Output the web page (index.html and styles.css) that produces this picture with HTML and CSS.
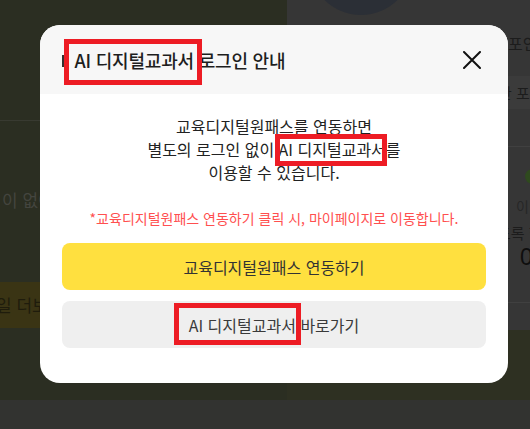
FILE: index.html
```html
<!DOCTYPE html>
<html lang="ko">
<head>
<meta charset="utf-8">
<title>AI 디지털교과서 로그인 안내</title>
<link rel="stylesheet" href="styles.css">
</head>
<body>
<div class="page">
  <div class="main">
    <div class="left">
      <div class="left-top"></div>
      <div class="left-msg">이 없이</div>
      <div class="left-band">일 더보기</div>
    </div>
    <div class="right">
      <div class="right-top">
        <div class="avatar"></div>
        <div class="r-title">포인트</div>
        <div class="r-box">한 포인트</div>
        <div class="r-line"></div>
        <div class="r-dot"></div>
        <div class="r-label">이번</div>
        <div class="r-sub">도록 합</div>
        <div class="r-num">0</div>
        <div class="r-line r-line2"></div>
      </div>
    </div>
  </div>
  <div class="footer"></div>

  <div class="modal" role="dialog">
    <div class="modal-head">
      <span class="bar"></span>
      <h2 class="title">AI 디지털교과서 로그인 안내</h2>
      <button class="close" aria-label="닫기">
        <svg width="18" height="18" viewBox="0 0 18 18"><path d="M1 1 L17 17 M17 1 L1 17" stroke="#111" stroke-width="2" stroke-linecap="round" fill="none"/></svg>
      </button>
    </div>
    <div class="modal-body">
      <p class="desc">교육디지털원패스를 연동하면<br>별도의 로그인 없이 AI 디지털교과서를<br>이용할 수 있습니다.</p>
      <p class="notice">*교육디지털원패스 연동하기 클릭 시, 마이페이지로 이동합니다.</p>
      <div class="btns">
        <button class="btn btn-yellow">교육디지털원패스 연동하기</button>
        <button class="btn btn-gray">AI 디지털교과서 바로가기</button>
      </div>
    </div>
  </div>

  <div class="mark mark-title"></div>
  <div class="mark mark-desc"></div>
  <div class="mark mark-btn"></div>
</div>
</body>
</html>
```

FILE: styles.css
```css
* { box-sizing: border-box; }
html, body { margin: 0; padding: 0; }
body {
  font-family: "Noto Sans CJK KR", "Noto Sans", sans-serif;
  background: #2c2e23;
}
.page {
  position: relative;
  width: 530px;
  height: 429px;
  overflow: hidden;
}
.main {
  display: flex;
  height: 400px;
}
.left {
  width: 287px;
  background: #2b2e22;
  display: flex;
  flex-direction: column;
}
.left-top {
  height: 121px;
  border-bottom: 1px solid #383a31;
}
.left-msg {
  margin-top: 67px;
  padding-left: 2px;
  font-size: 17px;
  line-height: 24px;
  color: #44453f;
  white-space: nowrap;
}
.left-band {
  margin-top: 70px;
  height: 46px;
  width: 200px;
  background: #3a3414;
  color: #1f1c0c;
  font-size: 17px;
  line-height: 46px;
  white-space: nowrap;
  margin-left: -4px;
}
.right {
  width: 243px;
  background: #2e3022;
}
.right-top {
  height: 330px;
  background: #363636;
  overflow: hidden;
  display: flex;
  flex-direction: column;
}
.avatar {
  flex: none;
  width: 104px;
  height: 104px;
  border-radius: 50%;
  background: #2b2f36;
  margin: -89px 0 0 22px;
}
.r-title {
  margin: 17px 0 0 221px;
  font-size: 16px;
  line-height: 22px;
  color: #1c1c1c;
  white-space: nowrap;
}
.r-box {
  margin: 22px 0 0 180px;
  height: 33px;
  background: #3b3b3b;
  padding-left: 31px;
  font-size: 15px;
  line-height: 33px;
  color: #1c1c1c;
  white-space: nowrap;
}
.r-line {
  margin-top: 37px;
  height: 1px;
  background: #404040;
}
.r-dot {
  flex: none;
  margin: 22px 0 0 238px;
  width: 15px;
  height: 15px;
  border-radius: 50%;
  background: #2f4a1e;
}
.r-label {
  margin: 12px 0 0 229px;
  font-size: 14px;
  line-height: 20px;
  color: #262626;
  white-space: nowrap;
}
.r-sub {
  margin: 6px 0 0 210px;
  font-size: 15px;
  line-height: 22px;
  color: #1c1c1c;
  white-space: nowrap;
}
.r-num {
  margin: 0 0 0 233px;
  font-family: "Liberation Sans", sans-serif;
  font-size: 23px;
  line-height: 26px;
  color: #0e0e0e;
}
.r-line2 { margin-top: 32px; }
.footer {
  height: 29px;
  background: #323330;
}

/* modal */
.modal {
  position: absolute;
  left: 40px;
  top: 25px;
  width: 468px;
  height: 358px;
  border-radius: 20px;
  background: #fff;
  overflow: hidden;
  display: flex;
  flex-direction: column;
}
.modal-head {
  height: 69px;
  flex: none;
  background: #f7f7f7;
  display: flex;
  align-items: center;
  padding: 0 27px 0 22px;
}
.bar {
  width: 1.5px;
  height: 12px;
  background: #333;
  margin: 2px 11px 0 0;
}
.title {
  flex: 1;
  margin: 0;
  font-size: 18px;
  font-weight: 500;
  letter-spacing: -0.2px;
  color: #1e1e1e;
  line-height: 24px;
}
.close {
  width: 18px;
  height: 18px;
  padding: 0;
  border: 0;
  background: none;
  display: block;
}
.close svg { display: block; }
.modal-body {
  padding: 21px 22px 35px;
  display: flex;
  flex-direction: column;
}
.desc {
  margin: 0;
  text-align: center;
  font-size: 16px;
  line-height: 23px;
  color: #222;
}
.notice {
  margin: 25px 0 0;
  text-align: center;
  font-size: 14px;
  line-height: 18px;
  color: #ff4f4f;
}
.btns {
  margin-top: 16px;
  display: flex;
  flex-direction: column;
  gap: 11px;
}
.btn {
  height: 47px;
  border: 0;
  border-radius: 8px;
  font-family: "Noto Sans CJK KR", "Noto Sans", sans-serif;
  font-size: 16px;
  color: #333;
}
.btn-yellow { background: #ffe03f; }
.btn-gray { background: #efefef; color: #3a3a3a; }

/* red annotation boxes */
.mark {
  position: absolute;
  border: 5px solid #ed1c24;
}
.mark-title { left: 64px; top: 39px; width: 138px; height: 46px; }
.mark-desc { left: 275px; top: 134px; width: 112px; height: 32px; }
.mark-btn { left: 174px; top: 303px; width: 127px; height: 42px; }
```
